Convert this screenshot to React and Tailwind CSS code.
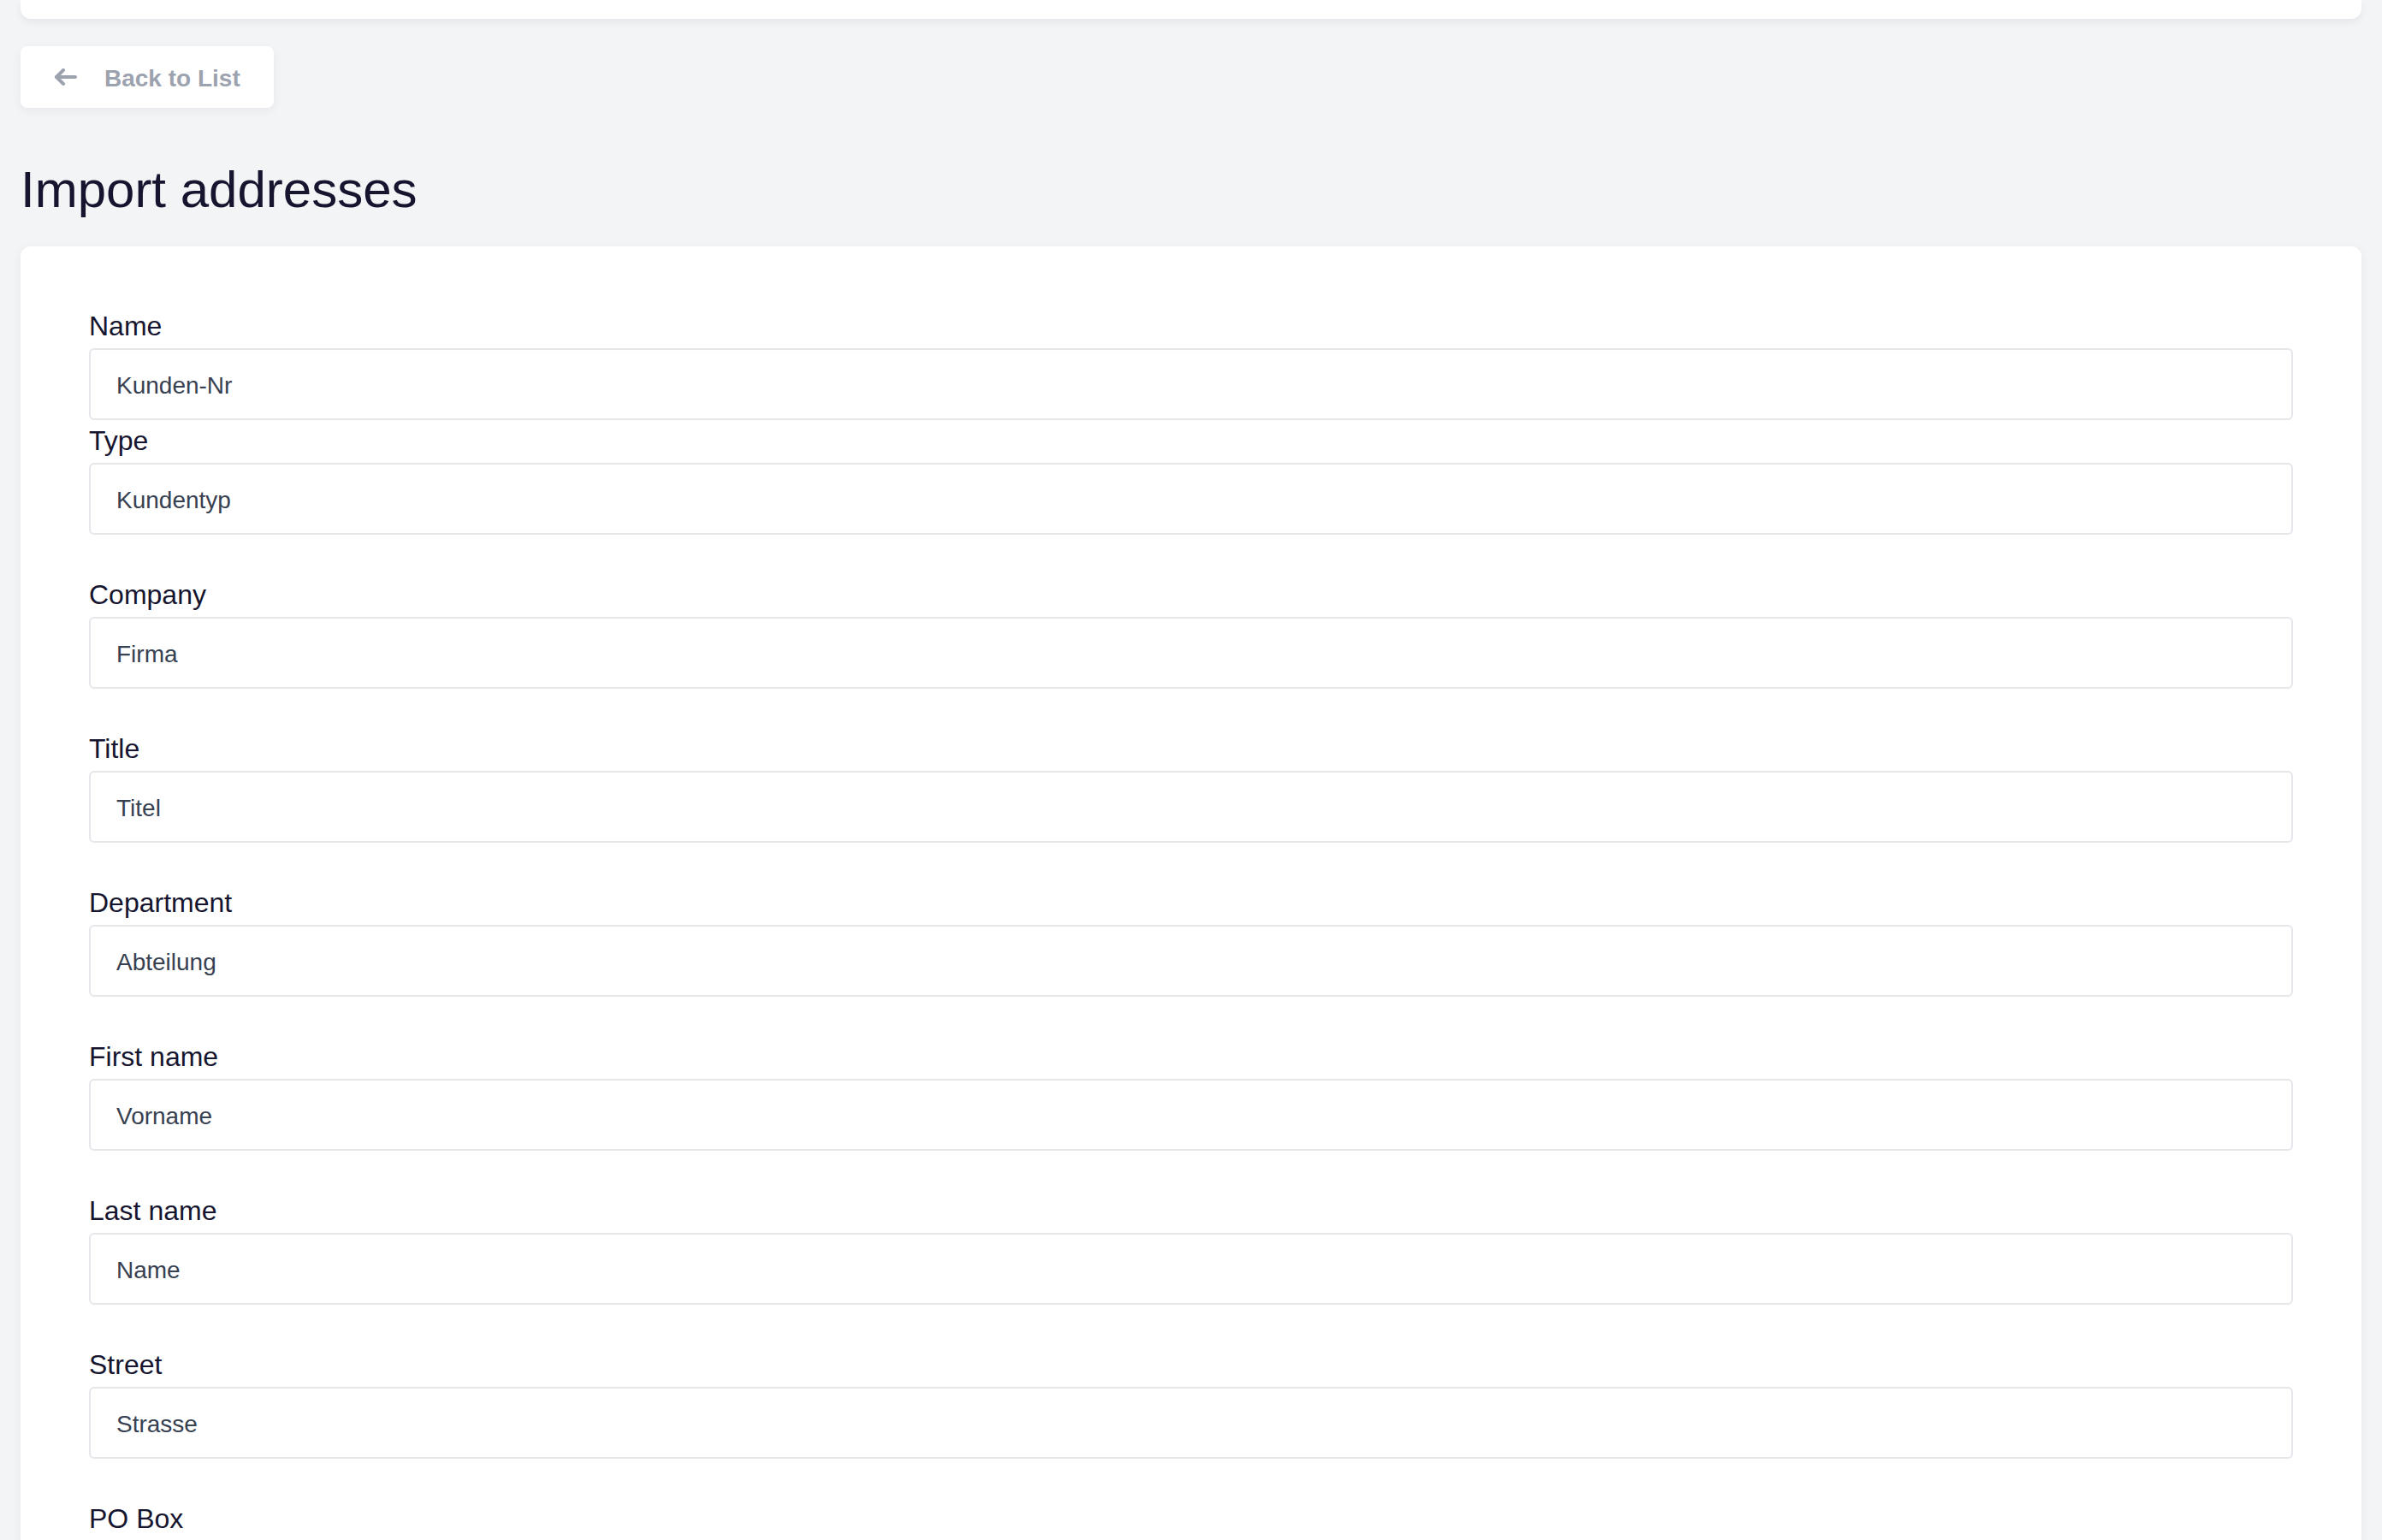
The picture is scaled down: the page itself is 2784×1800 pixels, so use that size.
const fields = [
    { label: "Name", value: "Kunden-Nr" },
    { label: "Type", value: "Kundentyp" },
    { label: "Company", value: "Firma" },
    { label: "Title", value: "Titel" },
    { label: "Department", value: "Abteilung" },
    { label: "First name", value: "Vorname" },
    { label: "Last name", value: "Name" },
    { label: "Street", value: "Strasse" },
    { label: "PO Box", value: "Postfach" },
];

function Field({ label, value }) {
    return (
        <div>
            <label className="block text-[32px] leading-[48px] text-[#16152f]">{label}</label>
            <input
                type="text"
                defaultValue={value}
                className="mt-[2px] block w-full h-[84px] px-[30px] pt-[3px] border-2 border-[#e5e7eb] rounded-[6px] bg-white text-[28px] text-[#374151] outline-none"
                style={{ fontFamily: "inherit" }}
            />
        </div>
    );
}

export default function App() {
    return (
        <div
            className="min-h-screen bg-[#f3f4f6] px-6 pb-10"
            style={{ fontFamily: '"Liberation Sans", Arial, sans-serif' }}
        >
            {/* Top bar (card bottom edge) */}
            <div className="h-[22px] bg-white rounded-b-[12px] shadow-[0_4px_10px_rgba(17,24,39,0.06)]"></div>

            {/* Back button */}
            <button className="mt-8 h-[72px] flex items-center gap-[31px] pl-[39px] pr-[39px] bg-white rounded-[8px] shadow-[0_4px_12px_rgba(17,24,39,0.05)]">
                <svg width="28" height="20" viewBox="0 0 28 20" fill="none" stroke="#9ca3af" strokeWidth="4" strokeLinecap="round" strokeLinejoin="round">
                    <path d="M11 2 L3 10 L11 18" />
                    <path d="M3 10 H25" />
                </svg>
                <span className="pt-[4px] text-[28px] font-bold text-[#9ca3af]">Back to List</span>
            </button>

            {/* Page title */}
            <h1 className="mt-[60px] text-[60px] leading-[72px] text-[#16152f]">Import addresses</h1>

            {/* Form card */}
            <div className="mt-[30px] bg-white rounded-[12px] shadow-[0_4px_14px_rgba(17,24,39,0.05)] px-20 pt-[69px] pb-16">
                <div className="flex flex-col">
                    <Field {...fields[0]} />
                    <Field {...fields[1]} />
                    <div className="mt-[46px] flex flex-col gap-[46px]">
                        {fields.slice(2).map((f) => (
                            <Field key={f.label} {...f} />
                        ))}
                    </div>
                </div>
            </div>
        </div>
    );
}
